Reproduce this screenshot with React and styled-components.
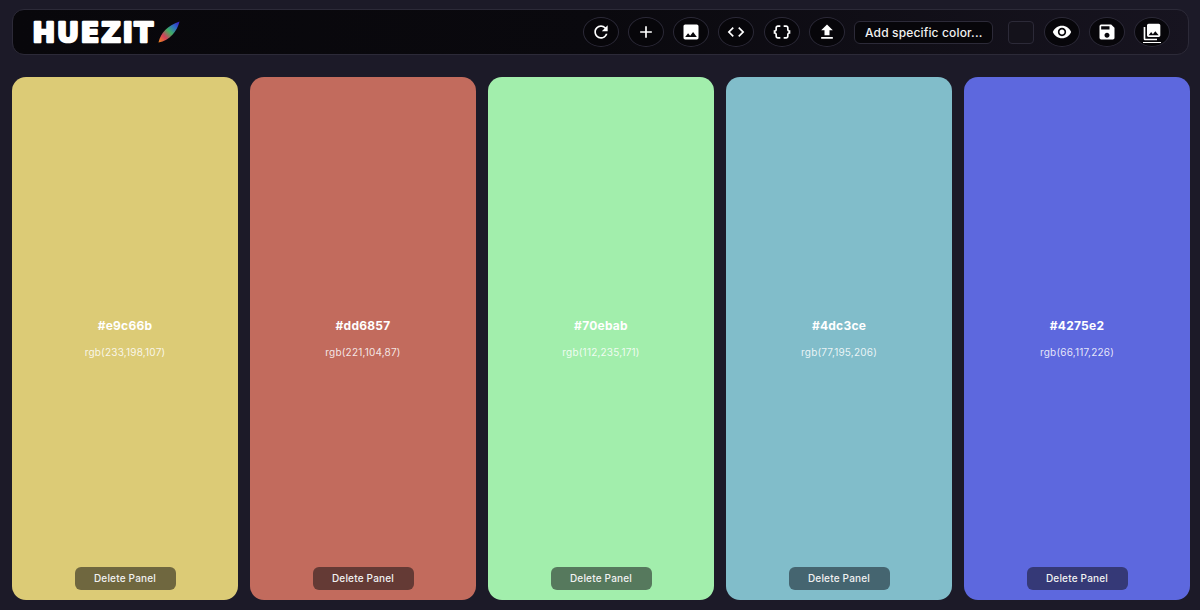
import React from "react";
import styled, { createGlobalStyle } from "styled-components";
import {
  MdRefresh,
  MdAdd,
  MdImage,
  MdCode,
  MdDataObject,
  MdUpload,
  MdVisibility,
  MdSave,
  MdPhotoLibrary,
} from "react-icons/md";

const panels = [
  { hex: "#e9c66b", rgb: "rgb(233,198,107)", bg: "#dccb76", btn: "#6f673f" },
  { hex: "#dd6857", rgb: "rgb(221,104,87)", bg: "#c26b5d", btn: "#643a35" },
  { hex: "#70ebab", rgb: "rgb(112,235,171)", bg: "#a2eeac", btn: "#56795d" },
  { hex: "#4dc3ce", rgb: "rgb(77,195,206)", bg: "#81bdca", btn: "#456570" },
  { hex: "#4275e2", rgb: "rgb(66,117,226)", bg: "#5d68de", btn: "#353977" },
];

const App = () => {
  return (
    <>
      <GlobalStyle />
      <Page>
        <Navbar>
          <LogoWrap>
            <LogoText viewBox="0 0 136 36">
              <text x="1.5" y="27.5">HUEZIT</text>
            </LogoText>
            <Feather viewBox="0 0 24 24">
              <defs>
                <linearGradient id="feather" x1="0" y1="1" x2="1" y2="0">
                  <stop offset="0" stopColor="#f08a1d" />
                  <stop offset="0.28" stopColor="#d4405a" />
                  <stop offset="0.52" stopColor="#3fae62" />
                  <stop offset="0.75" stopColor="#2f6cc4" />
                  <stop offset="1" stopColor="#3a12c8" />
                </linearGradient>
              </defs>
              <path d="M0.5 23.5C3 13 10 5 23.5 0.5C21 11 13 21 0.5 23.5Z" fill="url(#feather)" />
            </Feather>
          </LogoWrap>
          <Tools>
            <RoundButton><MdRefresh /></RoundButton>
            <RoundButton><MdAdd /></RoundButton>
            <RoundButton><MdImage /></RoundButton>
            <RoundButton><MdCode /></RoundButton>
            <RoundButton><MdDataObject /></RoundButton>
            <RoundButton><MdUpload /></RoundButton>
            <ColorInput>Add specific color...</ColorInput>
            <Swatch />
            <RoundButton><MdVisibility /></RoundButton>
            <RoundButton><MdSave /></RoundButton>
            <RoundButton>
              <MdPhotoLibrary />
              <Underline />
            </RoundButton>
          </Tools>
        </Navbar>
        <Panels>
          {panels.map((p) => (
            <Panel key={p.hex} $bg={p.bg}>
              <Hex>{p.hex}</Hex>
              <Rgb>{p.rgb}</Rgb>
              <DeleteButton $bg={p.btn}>Delete Panel</DeleteButton>
            </Panel>
          ))}
        </Panels>
      </Page>
    </>
  );
};

const GlobalStyle = createGlobalStyle`
  html, body {
    margin: 0;
    padding: 0;
    background: #1c1a28;
  }
  * {
    box-sizing: border-box;
  }
`;

const Page = styled.div`
  width: 1200px;
  height: 610px;
  overflow: hidden;
  padding: 9px 11px 10px 12px;
  display: flex;
  flex-direction: column;
  gap: 22px;
  font-family: Inter, "Liberation Sans", sans-serif;
`;

const Navbar = styled.div`
  height: 46px;
  flex: none;
  display: flex;
  align-items: center;
  justify-content: space-between;
  padding: 0 18px 0 18px;
  border: 1px solid #2c2a38;
  border-radius: 12px;
  background: linear-gradient(90deg, #08070b 0%, #0a090e 50%, #171420 100%);
`;

const LogoWrap = styled.div`
  display: flex;
  align-items: center;
`;

const LogoText = styled.svg`
  width: 136px;
  height: 36px;

  text {
    font-family: "DejaVu Sans", sans-serif;
    font-size: 27px;
    font-weight: 700;
    letter-spacing: 1.9px;
    fill: #fff;
    stroke: #fff;
    stroke-width: 2.6px;
    stroke-linejoin: round;
  }
`;

const Feather = styled.svg`
  width: 22px;
  height: 22px;
  margin-left: -9px;
`;

const Tools = styled.div`
  display: flex;
  align-items: center;
  gap: 9.25px;
`;

const RoundButton = styled.div`
  position: relative;
  width: 36px;
  height: 30px;
  border-radius: 50%;
  border: 1px solid #2c2a38;
  background: #07060a;
  color: #fff;
  display: flex;
  align-items: center;
  justify-content: center;
  font-size: 20px;
`;

const Underline = styled.span`
  position: absolute;
  left: 8px;
  right: 8px;
  bottom: 3px;
  height: 1.5px;
  background: #fff;
`;

const ColorInput = styled.div`
  width: 138.5px;
  height: 23px;
  border: 1px solid #2c2a38;
  border-radius: 6px;
  background: #07060a;
  color: #f2f2f2;
  font-size: 12px;
  font-weight: 500;
  line-height: 21px;
  padding-left: 10px;
  letter-spacing: 0.15px;
  white-space: nowrap;
`;

const Swatch = styled.div`
  width: 26.5px;
  height: 23px;
  margin-left: 6px;
  border: 1px solid #2c2a38;
  border-radius: 4px;
  background: #14121b;
`;

const Panels = styled.div`
  flex: 1;
  display: grid;
  grid-template-columns: repeat(5, 226px);
  gap: 12px;
`;

const Panel = styled.div`
  position: relative;
  display: flex;
  flex-direction: column;
  align-items: center;
  padding-top: 241px;
  border-radius: 14px;
  background: ${(props) => props.$bg};
  color: #fff;
`;

const Hex = styled.div`
  font-size: 12px;
  line-height: 16px;
  font-weight: 700;
  letter-spacing: 0.25px;
`;

const Rgb = styled.div`
  margin-top: 11px;
  font-size: 10px;
  line-height: 14px;
  letter-spacing: 0.2px;
  color: rgba(255, 255, 255, 0.85);
`;

const DeleteButton = styled.div`
  margin-top: auto;
  margin-bottom: 10px;
  width: 101px;
  height: 23px;
  border-radius: 6px;
  background: ${(props) => props.$bg};
  color: #f1f1f1;
  font-size: 10px;
  font-weight: 500;
  line-height: 23px;
  letter-spacing: 0.2px;
  text-align: center;
`;

export default App;
